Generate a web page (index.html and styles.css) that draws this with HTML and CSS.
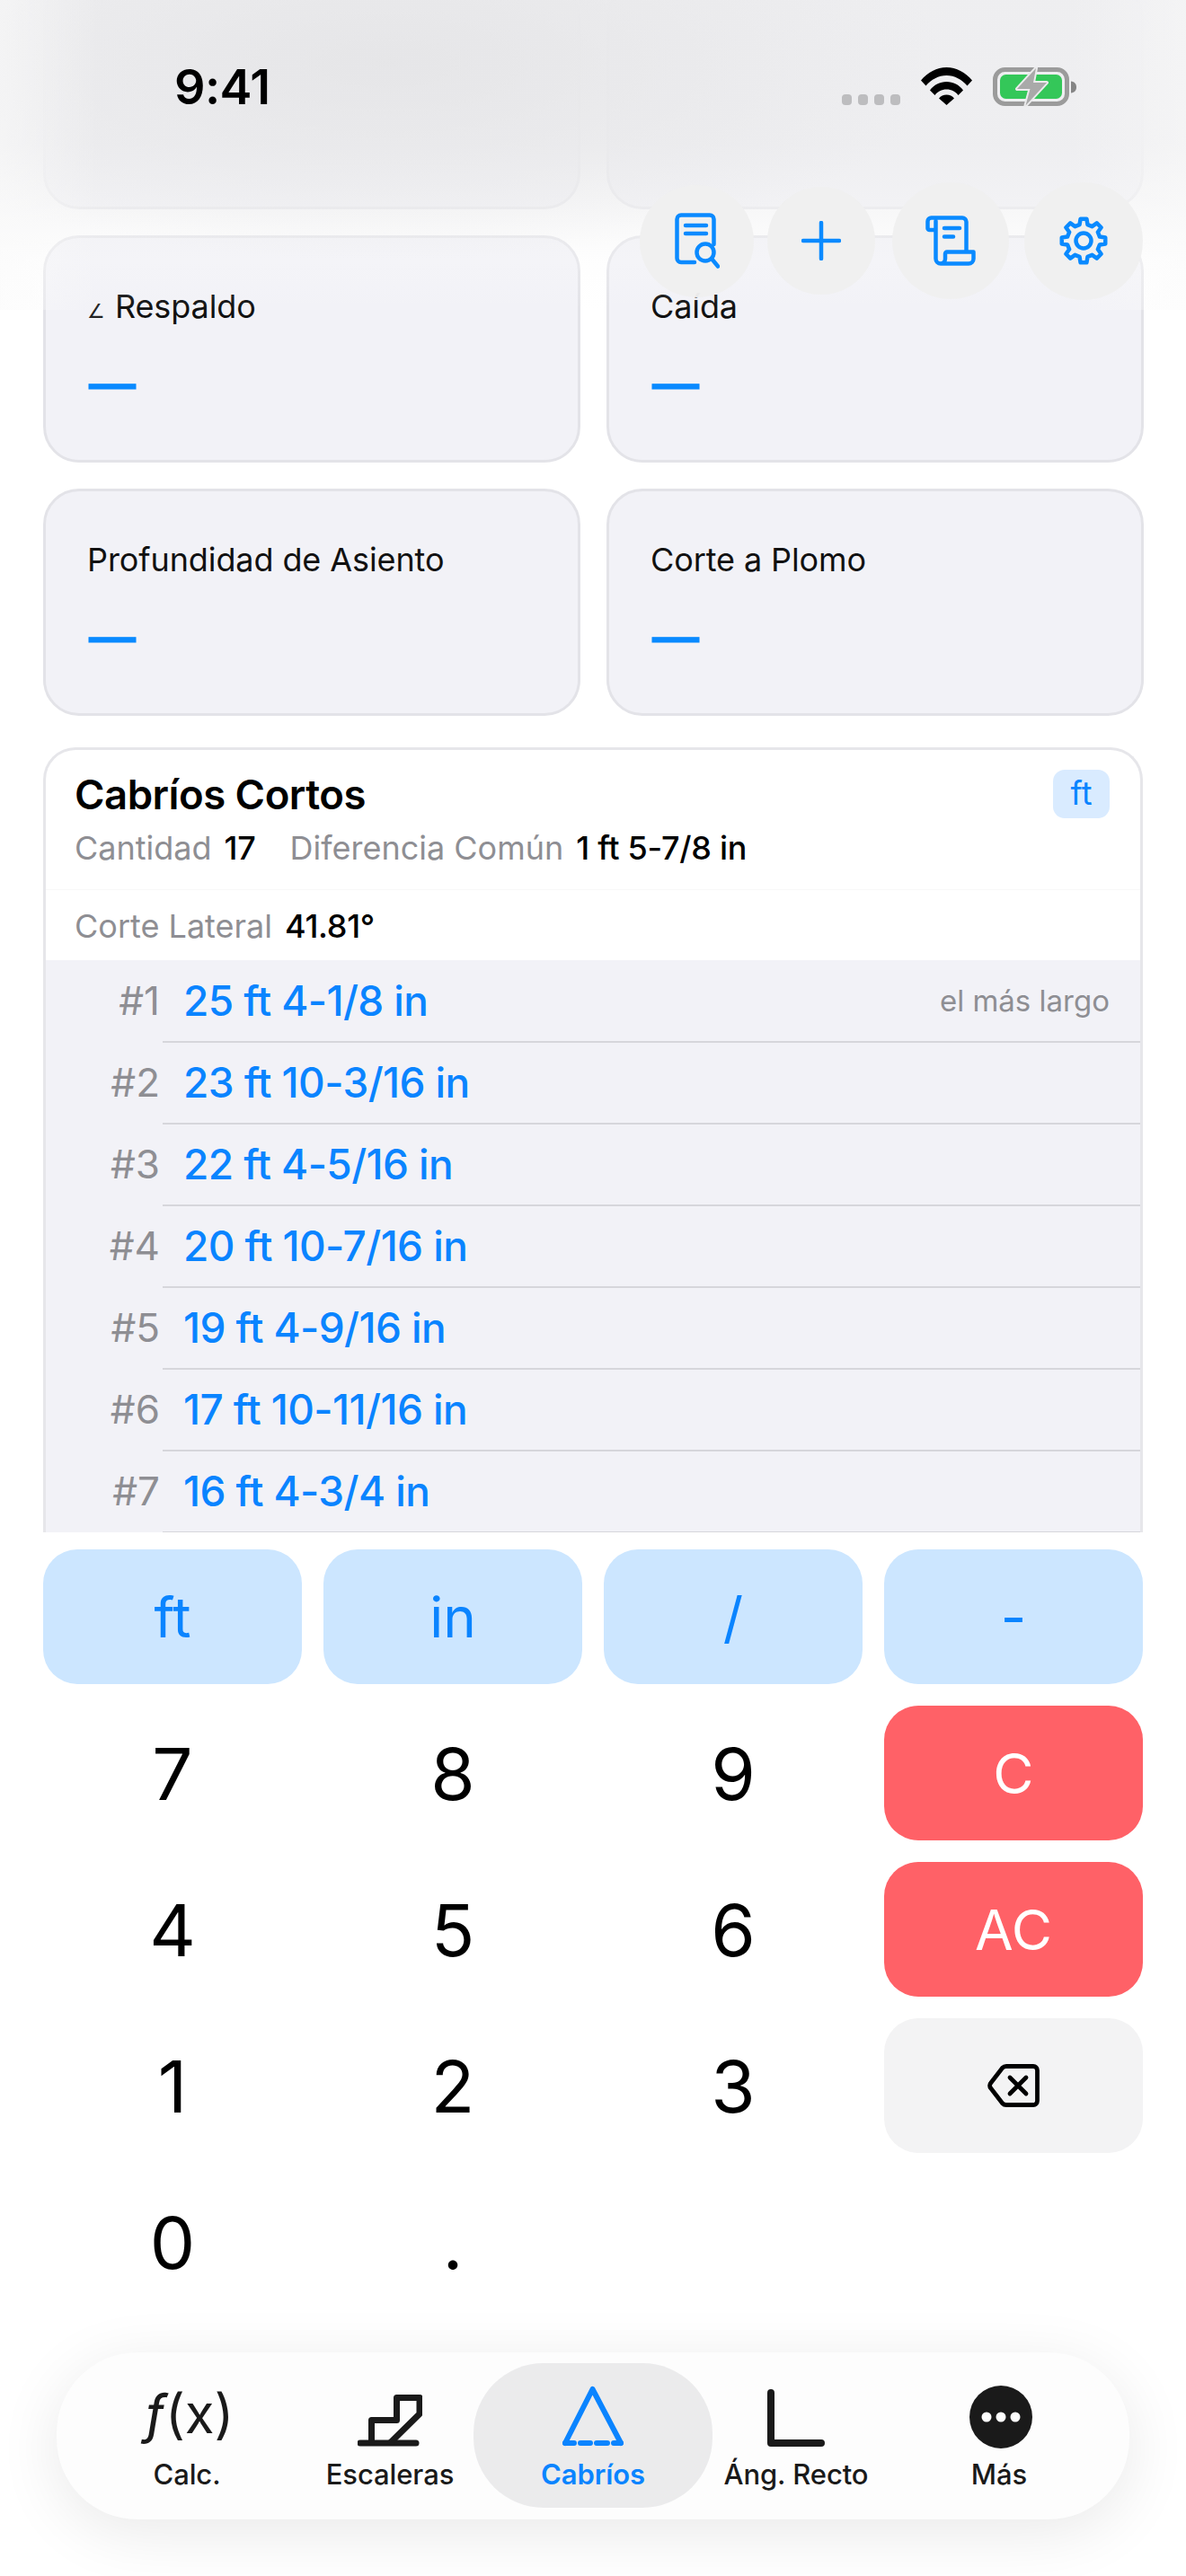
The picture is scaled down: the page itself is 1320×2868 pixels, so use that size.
FILE: index.html
```html
<!DOCTYPE html>
<html lang="es">
<head>
<meta charset="utf-8">
<title>Cabríos</title>
<link rel="stylesheet" href="styles.css">
</head>
<body>
<div class="phone">
  <main class="scroll">
    <section class="cards">
      <div class="card"></div>
      <div class="card"></div>
      <div class="card"><div class="label"><span class="ang">∠</span>Respaldo</div><div class="dash">—</div></div>
      <div class="card"><div class="label">Caída</div><div class="dash">—</div></div>
      <div class="card"><div class="label">Profundidad de Asiento</div><div class="dash">—</div></div>
      <div class="card"><div class="label">Corte a Plomo</div><div class="dash">—</div></div>
    </section>
    <section class="panel">
      <header class="panel-head">
        <div class="title-row"><h2>Cabríos Cortos</h2><span class="badge">ft</span></div>
        <div class="meta meta-a"><span class="k">Cantidad</span><span class="v">17</span><span class="k k2">Diferencia Común</span><span class="v">1 ft 5-7/8 in</span></div>
        <div class="meta meta-b"><span class="k">Corte Lateral</span><span class="v">41.81°</span></div>
      </header>
      <ul class="rows">
        <li class="row"><span class="n">#1</span><span class="val">25 ft 4-1/8 in</span><span class="note">el más largo</span></li>
        <li class="row"><span class="n">#2</span><span class="val">23 ft 10-3/16 in</span></li>
        <li class="row"><span class="n">#3</span><span class="val">22 ft 4-5/16 in</span></li>
        <li class="row"><span class="n">#4</span><span class="val">20 ft 10-7/16 in</span></li>
        <li class="row"><span class="n">#5</span><span class="val">19 ft 4-9/16 in</span></li>
        <li class="row"><span class="n">#6</span><span class="val">17 ft 10-11/16 in</span></li>
        <li class="row"><span class="n">#7</span><span class="val">16 ft 4-3/4 in</span></li>
      </ul>
    </section>
  </main>

  <div class="top-fade"></div>

  <div class="status">
    <span class="time">9:41</span>
    <div class="status-icons">
      <div class="dots"><i></i><i></i><i></i><i></i></div>
      <svg class="wifi" viewBox="0 0 57 42"><path d="M0 14.500C7.500 5.500 17.500 0 28.500 0S49.500 5.500 57 14.500L51.500 20.500C45.500 13.500 37.500 9 28.500 9S11.500 13.500 5.500 20.500Z"/><path d="M10 25.500C14.500 19.500 21 16 28.500 16S42.500 19.500 47 25.500L41.500 31C38.500 27 34 24.500 28.500 24.500S18.500 27 15.500 31Z"/><path d="M20 34.500C22 32 25 30.500 28.500 30.500S35 32 37 34.500L28.500 42Z"/></svg>
      <svg class="battery" viewBox="0 0 94 44"><rect x="2.500" y="2.500" width="80" height="38" rx="11" fill="none" stroke="#9b9b9b" stroke-width="5"/><rect x="8" y="8" width="69" height="27" rx="6.500" fill="#34c759"/><path d="M87 15.500c4 .5 6 3 6 6.500s-2 6-6 6.500z" fill="#858585"/><path d="M48 1 27 24h14.500L36.500 42.500 60 17H45z" fill="#a9a9a9" stroke="#ebebec" stroke-width="4" stroke-linejoin="round" paint-order="stroke"/></svg>
    </div>
  </div>

  <nav class="actions">
    <button class="act act-a"><svg viewBox="0 0 50 62" class="ai ai-doc"><path d="M22 55H7a4.500 4.500 0 0 1-4.500-4.500V7A4.500 4.500 0 0 1 7 2.500h32A4.500 4.500 0 0 1 43.500 7v28M12 14h23M12 23h23"/><circle cx="34" cy="44" r="9.500"/><path d="m41 51 7 8.500"/></svg></button>
    <button class="act act-b"><svg viewBox="0 0 44 44" class="ai ai-plus"><path d="M22 2v40M2 22h40"/></svg></button>
    <button class="act act-c"><svg viewBox="0 0 56 56" class="ai ai-scroll"><path d="M12 2.500H6.500a4 4 0 0 0-4 4V14a2 2 0 0 0 2 2H11.500M8 2.500h33a4.500 4.500 0 0 1 4.500 4.500v33M11.500 6v42a5.500 5.500 0 0 0 5.500 5.500h31a5.500 5.500 0 0 0 5.500-5.500v-7.500H24a2 2 0 0 0-2 2V48a5.500 5.500 0 0 1-5.500 5.500M21 14h17M21 23.500h10"/></svg></button>
    <button class="act act-d"><svg viewBox="-29 -29 58 58" class="ai ai-gear"><polygon points="-4.48,-17.95 -3.41,-24.26 3.41,-24.26 4.48,-17.95 9.53,-15.86 14.74,-19.57 19.57,-14.74 15.86,-9.53 17.95,-4.48 24.26,-3.41 24.26,3.41 17.95,4.48 15.86,9.53 19.57,14.74 14.74,19.57 9.53,15.86 4.48,17.95 3.41,24.26 -3.41,24.26 -4.48,17.95 -9.53,15.86 -14.74,19.57 -19.57,14.74 -15.86,9.53 -17.95,4.48 -24.26,3.41 -24.26,-3.41 -17.95,-4.48 -15.86,-9.53 -19.57,-14.74 -14.74,-19.57 -9.53,-15.86"/><circle r="8.500"/></svg></button>
  </nav>

  <section class="keypad">
    <button class="key key-unit">ft</button>
    <button class="key key-unit">in</button>
    <button class="key key-unit">/</button>
    <button class="key key-unit">-</button>
    <button class="key key-num">7</button>
    <button class="key key-num">8</button>
    <button class="key key-num">9</button>
    <button class="key key-red">C</button>
    <button class="key key-num">4</button>
    <button class="key key-num">5</button>
    <button class="key key-num">6</button>
    <button class="key key-red">AC</button>
    <button class="key key-num">1</button>
    <button class="key key-num">2</button>
    <button class="key key-num">3</button>
    <button class="key key-back"><svg viewBox="0 0 58 48" class="back-icon"><path d="M21 2.500h30a4.500 4.500 0 0 1 4.500 4.500v34a4.500 4.500 0 0 1-4.500 4.500H21a6 6 0 0 1-4.300-1.800L3.800 27a4.300 4.300 0 0 1 0-6L16.700 4.300A6 6 0 0 1 21 2.500Z"/><path d="m25 15 18 18M43 15 25 33"/></svg></button>
    <button class="key key-num">0</button>
    <button class="key key-num">.</button>
  </section>

  <nav class="tabbar">
    <div class="tab"><div class="tab-icon"><span class="fx"><em>ƒ</em>(x)</span></div><span class="tab-label">Calc.</span></div>
    <div class="tab"><div class="tab-icon"><svg viewBox="0 0 72 58" class="stairs"><path d="M3 54h62"/><path d="M15.500 53V28.500h28V3.500h25.500v18L37 53"/></svg></div><span class="tab-label">Escaleras</span></div>
    <div class="tab tab-on"><div class="tab-icon"><svg viewBox="0 0 68 68" class="tri"><path d="M3 64 33.500 4 65 64"/><path d="M3 64h10M20 64h11M38 64h12M57 64h8"/></svg></div><span class="tab-label">Cabríos</span></div>
    <div class="tab"><div class="tab-icon"><svg viewBox="0 0 64 64" class="ell"><path d="M4 4v56h56"/></svg></div><span class="tab-label">Áng. Recto</span></div>
    <div class="tab"><div class="tab-icon"><svg viewBox="0 0 70 70" class="more"><circle cx="35" cy="35" r="35" fill="#1a1a1a"/><circle cx="19" cy="35" r="5.500" fill="#fff"/><circle cx="35" cy="35" r="5.500" fill="#fff"/><circle cx="51" cy="35" r="5.500" fill="#fff"/></svg></div><span class="tab-label">Más</span></div>
  </nav>
</div>
</body>
</html>
```
FILE: styles.css
```css
* { box-sizing: border-box; margin: 0; padding: 0; }
html, body { width: 1320px; height: 2868px; background: #fff; overflow: hidden; }
body { font-family: Inter, "Liberation Sans", sans-serif; color: #000; }
button { font: inherit; border: 0; background: none; color: inherit; }
.phone { position: relative; width: 1320px; height: 2868px; overflow: hidden; background: #fff; }

.scroll { height: 1707px; overflow: hidden; padding: 0 48px; }
.cards { display: grid; grid-template-columns: 598px 598px; column-gap: 29px; row-gap: 29px; margin-top: -20px; }
.card { height: 253px; background: #f2f2f7; border: 3px solid #e3e3e8; border-radius: 40px; padding: 55px 46px 0; }
.label { height: 42px; font-size: 36px; line-height: 42px; letter-spacing: -.1px; color: #111; white-space: nowrap; }
.ang { font-size: 22px; line-height: 0; margin-right: 11px; color: #222; }
.dash { font-family: "Liberation Sans", sans-serif; font-size: 52px; line-height: 50px; margin-top: 39px; margin-left: 2px; color: #0a8aff; font-weight: 700; -webkit-text-stroke: 1px #0a8aff; }

.panel { margin-top: 35px; width: 1224px; background: #fff; border: 3px solid #e6e6ea; border-bottom: 0; border-radius: 36px 36px 0 0; overflow: hidden; }
.panel-head { height: 234px; padding: 21px 34px 0 32px; position: relative; }
.title-row { display: flex; justify-content: space-between; align-items: flex-start; }
h2 { font-size: 45.500px; line-height: 58px; font-weight: 600; letter-spacing: -.5px; }
.badge { width: 63px; height: 54px; margin-top: 1px; background: #d9ebff; color: #0a84ff; border-radius: 13px; font-size: 36px; line-height: 52px; text-align: center; }
.meta { display: flex; font-size: 36px; line-height: 44px; white-space: nowrap; }
.meta-a { margin-top: 8px; height: 41px; }
.meta-b { margin-top: 46px; }
.meta-b::before { content: ""; position: absolute; left: 0; right: 0; top: 155px; height: 1px; background: #f8f8f8; }
.k { color: #8e8e93; margin-right: 14px; }
.k2 { margin-left: 38px; }
.v { color: #000; font-weight: 500; letter-spacing: -.3px; }

.rows { list-style: none; background: #f2f2f7; }
.row { display: flex; align-items: center; height: 91px; padding-bottom: 2px; position: relative; }
.row::after { content: ""; position: absolute; left: 130px; right: 0; bottom: -1px; height: 2px; background: #d6d6db; }
.n { width: 127px; text-align: right; font-size: 44px; color: #8e8e93; flex: none; }
.val { margin-left: 26px; font-size: 46px; font-weight: 500; color: #0a84ff; letter-spacing: -.6px; flex: 1; }
.note { font-size: 33px; color: #8e8e93; margin-right: 34px; }

.top-fade { position: absolute; left: 0; top: 0; width: 1320px; height: 345px; pointer-events: none;
  background:
    linear-gradient(to right, rgba(250,250,250,.55), rgba(250,250,250,0) 110px, rgba(250,250,250,0) 1190px, rgba(250,250,250,.45)),
    radial-gradient(ellipse 620px 220px at 430px 70px, rgba(224,224,226,.6), rgba(224,224,226,0)),
    linear-gradient(to bottom, rgba(238,238,240,.97) 0, rgba(238,238,240,.92) 160px, rgba(242,242,243,.62) 230px, rgba(250,250,250,.25) 290px, rgba(255,255,255,0) 345px); }

.status { position: absolute; left: 0; top: 0; width: 1320px; height: 150px; }
.time { position: absolute; left: 194px; top: 64px; font-size: 54px; line-height: 66px; font-weight: 600; letter-spacing: -.6px; }
.status-icons { position: absolute; left: 937px; top: 75px; display: flex; align-items: flex-start; }
.dots { display: flex; gap: 7px; margin-top: 30px; margin-right: 23px; }
.dots i { width: 11px; height: 12px; border-radius: 4px; background: #bdbdbf; }
.wifi { width: 57px; height: 42px; fill: #000; margin-right: 23px; }
.battery { width: 94px; height: 44px; }

.actions { position: absolute; left: 712px; top: 203px; height: 130px; display: flex; align-items: center; }
.act { display: flex; align-items: center; justify-content: center; border-radius: 50%; background: rgba(239,239,240,.97); flex: none; }
.act-a { width: 127px; height: 125px; margin-right: 15px; }
.act-b { width: 120px; height: 120px; margin-right: 19px; }
.act-c { width: 130px; height: 130px; margin-right: 17px; }
.act-d { width: 132px; height: 131px; }
.ai { fill: none; stroke: #0a8aff; stroke-width: 4.500; stroke-linecap: round; stroke-linejoin: round; display: block; }
.ai-doc { width: 50px; height: 62px; }
.ai-plus { width: 44px; height: 44px; }
.ai-scroll { width: 56px; height: 56px; }
.ai-gear { width: 58px; height: 58px; }

.keypad { display: grid; grid-template-columns: repeat(4, 288px); grid-auto-rows: 150px; column-gap: 24px; row-gap: 24px; padding: 0 48px; margin-top: 18px; }
.key { display: flex; align-items: center; justify-content: center; border-radius: 38px; }
.key-unit { background: #cce6ff; color: #0a84ff; font-size: 62px; }
.key-num { font-size: 80px; color: #000; }
.key-red { background: #ff6167; color: #fff; font-size: 62px; }
.key-back { background: #f3f3f4; }
.back-icon { width: 58px; height: 48px; fill: none; stroke: #000; stroke-width: 4.800; stroke-linecap: round; stroke-linejoin: round; }

.tabbar { position: absolute; left: 63px; top: 2619px; width: 1194px; height: 186px; padding: 0 32px; display: grid; grid-template-columns: repeat(5, 226px); background: #fdfdfd; border-radius: 90px; box-shadow: 0 14px 70px rgba(0,0,0,.09); }
.tab { position: relative; display: flex; flex-direction: column; align-items: center; }
.tab-on::before { content: ""; position: absolute; left: -20px; right: -20px; top: 12px; height: 161px; border-radius: 78px; background: #ebebec; }
.tab-icon { position: relative; height: 105px; display: flex; align-items: flex-end; justify-content: center; }
.tab-label { position: relative; font-size: 31px; line-height: 40px; font-weight: 500; margin-top: 11px; color: #1a1a1a; white-space: nowrap; letter-spacing: -.1px; }
.tab-on .tab-label { color: #0a84ff; font-weight: 600; }
.fx { font-family: Inter, sans-serif; font-size: 60px; line-height: 64px; color: #1a1a1a; margin-bottom: 5px; margin-left: 5px; }
.fx em { font-style: italic; }
.stairs { width: 72px; height: 58px; fill: none; stroke: #1a1a1a; stroke-width: 7; stroke-linecap: round; stroke-linejoin: round; }
.tri { width: 68px; height: 68px; fill: none; stroke: #0a84ff; stroke-width: 6; stroke-linecap: round; stroke-linejoin: round; }
.ell { width: 64px; height: 64px; fill: none; stroke: #1a1a1a; stroke-width: 8; stroke-linecap: round; stroke-linejoin: round; }
.more { width: 70px; height: 70px; margin-bottom: -2px; margin-left: 4px; }
```
